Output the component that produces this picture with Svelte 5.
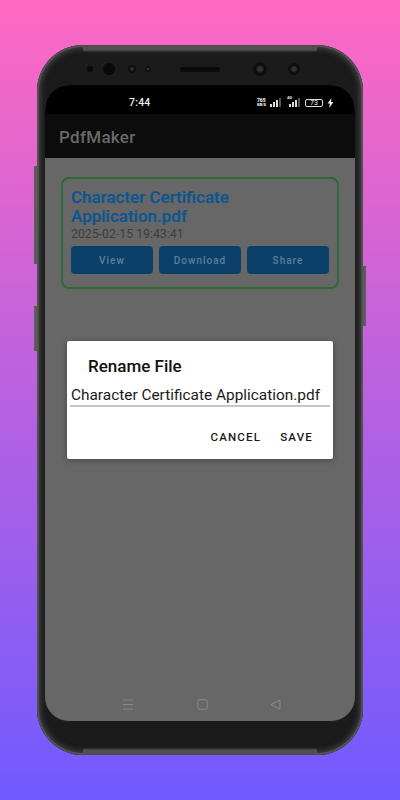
<script>
	const actions = ['View', 'Download', 'Share'];
	const bars = [3, 5, 7, 9];
</script>

<main class="page">
	<div class="phone">
		<span class="side-btn left one"></span>
		<span class="side-btn left two"></span>
		<span class="side-btn right"></span>
		<span class="band top"></span>
		<span class="band bottom"></span>

		<div class="bezel">
			<div class="top-bezel">
				<i class="dot" style="left:42px;width:6px;height:6px"></i>
				<i class="dot" style="left:58px;width:12px;height:12px"></i>
				<i class="dot ring" style="left:83px;width:8px;height:8px"></i>
				<i class="dot ring" style="left:100px;width:6px;height:6px"></i>
				<i class="speaker"></i>
				<i class="dot ring" style="left:208px;width:14px;height:14px"></i>
				<i class="dot ring" style="left:243px;width:12px;height:12px"></i>
			</div>

			<div class="screen">
				<div class="status">
					<span class="time">7:44</span>
					<div class="status-icons">
						<span class="kbs"><b>765</b><b>KB/S</b></span>
						<span class="signal">
							{#each bars as h}<i style="height:{h}px"></i>{/each}
						</span>
						<span class="signal lte">
							<em>4G</em>
							{#each bars as h}<i style="height:{h}px"></i>{/each}
						</span>
						<span class="battery">73</span>
						<svg width="7" height="10" viewBox="0 0 7 10"><path d="M4.4 0 .6 5.6h2.2L2.2 10 6.4 4H4z" fill="#eee"/></svg>
					</div>
				</div>
				<header class="appbar">PdfMaker</header>

				<div class="content">
					<div class="card">
						<h2>Character Certificate Application.pdf</h2>
						<p>2025-02-15 19:43:41</p>
						<div class="actions">
							{#each actions as a}<button>{a}</button>{/each}
						</div>
					</div>

					<div class="dialog">
						<h3>Rename File</h3>
						<div class="field">Character Certificate Application.pdf</div>
						<div class="dialog-actions">
							<button>CANCEL</button>
							<button>SAVE</button>
						</div>
					</div>

					<nav class="softkeys">
						<svg width="12" height="11" viewBox="0 0 12 11"><path d="M1 1h10M1 5.5h10M1 10h10" stroke="#8a8a8a" fill="none"/></svg>
						<svg width="11" height="11" viewBox="0 0 11 11"><rect x=".75" y=".75" width="9.5" height="9.5" rx="2" stroke="#8a8a8a" stroke-width="1" fill="none"/></svg>
						<svg width="11" height="11" viewBox="0 0 11 11"><path d="M1 5.5 10 1v9z" stroke="#8a8a8a" stroke-linejoin="round" fill="none"/></svg>
					</nav>
				</div>
			</div>
		</div>
	</div>
</main>

<style>
	:global(body) {
		margin: 0;
	}

	.page {
		width: 400px;
		height: 800px;
		box-sizing: border-box;
		padding-top: 45px;
		display: flex;
		justify-content: center;
		background: linear-gradient(180deg, #ff69c2 0%, #705aff 100%);
		font-family: Roboto, "Liberation Sans", sans-serif;
	}

	.phone {
		position: relative;
		width: 326px;
		height: 710px;
	}

	.side-btn {
		position: absolute;
		width: 3px;
		background: #5c5c5c;
	}
	.side-btn.left {
		left: -3px;
	}
	.side-btn.one {
		top: 121px;
		height: 98px;
	}
	.side-btn.two {
		top: 261px;
		height: 45px;
	}
	.side-btn.right {
		right: -3px;
		top: 221px;
		height: 60px;
	}

	.band {
		position: absolute;
		left: 46px;
		right: 46px;
		height: 7px;
		background: #4c4c4c;
	}
	.band.top {
		top: 0;
		background: linear-gradient(180deg, #4a4a4a, #555 60%, #2a2a2a);
	}
	.band.bottom {
		bottom: 0;
		background: linear-gradient(0deg, #4a4a4a, #555 60%, #2a2a2a);
	}

	.bezel {
		height: 100%;
		box-sizing: border-box;
		padding: 0 8px;
		display: flex;
		flex-direction: column;
		background: #1b1b1b;
		border-radius: 46px;
		box-shadow: inset 0 0 0 2px #505050, inset 0 0 5px 4px #3e3e3e;
	}

	.top-bezel {
		position: relative;
		z-index: 1;
		flex: 0 0 40px;
	}
	.dot {
		position: absolute;
		top: 24px;
		transform: translateY(-50%);
		border-radius: 50%;
		background: #0a0a0a;
	}
	.dot.ring {
		background: radial-gradient(circle, #333 0 20%, #0d0d0d 45%, #111 100%);
	}
	.speaker {
		position: absolute;
		left: 135px;
		top: 22px;
		width: 40px;
		height: 5px;
		border-radius: 3px;
		background: #0a0a0a;
	}

	.screen {
		flex: 0 0 636px;
		display: flex;
		flex-direction: column;
		border-radius: 24px;
		overflow: hidden;
		background: #676767;
	}

	.status {
		flex: 0 0 29px;
		position: relative;
		background: #000;
		color: #eee;
	}
	.time {
		position: absolute;
		left: 84px;
		top: 12px;
		font-size: 10.5px;
		font-weight: 500;
		line-height: 12px;
		letter-spacing: 0.2px;
	}
	.status-icons {
		position: absolute;
		right: 21px;
		top: 12px;
		display: flex;
		align-items: center;
		gap: 4px;
		height: 11px;
	}
	.kbs {
		display: flex;
		flex-direction: column;
		font-size: 5px;
		line-height: 5px;
		font-weight: 700;
	}
	.kbs b:last-child {
		font-size: 4px;
		line-height: 4px;
	}
	.signal {
		position: relative;
		display: flex;
		align-items: flex-end;
		gap: 1px;
		height: 9px;
	}
	.signal i {
		width: 2px;
		background: #ddd;
	}
	.signal i:last-child {
		background: #555;
	}
	.signal.lte {
		margin-left: 4px;
	}
	.signal em {
		position: absolute;
		left: -2px;
		top: -2px;
		font-size: 4px;
		line-height: 4px;
		font-style: normal;
		font-weight: 700;
	}
	.battery {
		margin-left: 1px;
		width: 18px;
		height: 8px;
		box-sizing: border-box;
		border: 1px solid #ddd;
		border-radius: 2px;
		font-size: 7px;
		line-height: 6px;
		text-align: center;
	}

	.appbar {
		flex: 0 0 44px;
		box-sizing: border-box;
		padding: 13px 0 0 14px;
		background: #0c0c0c;
		color: #6a6a6a;
		font-size: 17px;
		font-weight: 500;
		line-height: 20px;
		letter-spacing: 0.3px;
	}

	.content {
		position: relative;
		flex: 1;
		display: flex;
		flex-direction: column;
		padding: 19px 16px 0;
	}

	.card {
		box-sizing: border-box;
		height: 112px;
		padding: 9px 8px 0;
		border: 2px solid #2f6a35;
		border-radius: 8px;
	}
	.card h2 {
		margin: 0;
		width: 190px;
		color: #0c5690;
		font-size: 17px;
		font-weight: 500;
		line-height: 19px;
		-webkit-text-stroke: 0.2px #0c5690;
	}
	.card p {
		margin: 1px 0 0;
		color: #3d3d3d;
		font-size: 12.3px;
		line-height: 15px;
	}
	.actions {
		display: flex;
		gap: 6px;
		margin-top: 4px;
	}
	.actions button {
		flex: 1;
		height: 28px;
		padding: 0;
		border: none;
		border-radius: 4px;
		background: #0a4069;
		color: #647d91;
		font: 500 10px Roboto, sans-serif;
		letter-spacing: 1px;
	}

	.dialog {
		position: absolute;
		left: 22px;
		top: 183px;
		width: 266px;
		height: 118px;
		background: #fff;
		border-radius: 2px;
		box-shadow: 0 1px 6px rgba(0, 0, 0, 0.35);
	}
	.dialog h3 {
		margin: 15px 0 0 21px;
		color: #111;
		font-size: 17px;
		font-weight: 500;
		line-height: 20px;
	}
	.field {
		margin: 9px 3px 0;
		padding: 0 1px;
		height: 20px;
		border-bottom: 2px solid #c6c6c6;
		color: #1a1a1a;
		font-size: 15.4px;
		line-height: 20px;
		white-space: nowrap;
	}
	.dialog-actions {
		display: flex;
		justify-content: flex-end;
		gap: 19px;
		padding: 24px 20px 0 0;
	}
	.dialog-actions button {
		padding: 0;
		border: none;
		background: none;
		color: #1a1a1a;
		font: 500 11.5px/13px Roboto, sans-serif;
		letter-spacing: 1.2px;
	}

	.softkeys {
		position: absolute;
		left: 0;
		right: 0;
		bottom: 11px;
		display: flex;
		justify-content: space-between;
		padding: 0 74px 0 77px;
	}
</style>
